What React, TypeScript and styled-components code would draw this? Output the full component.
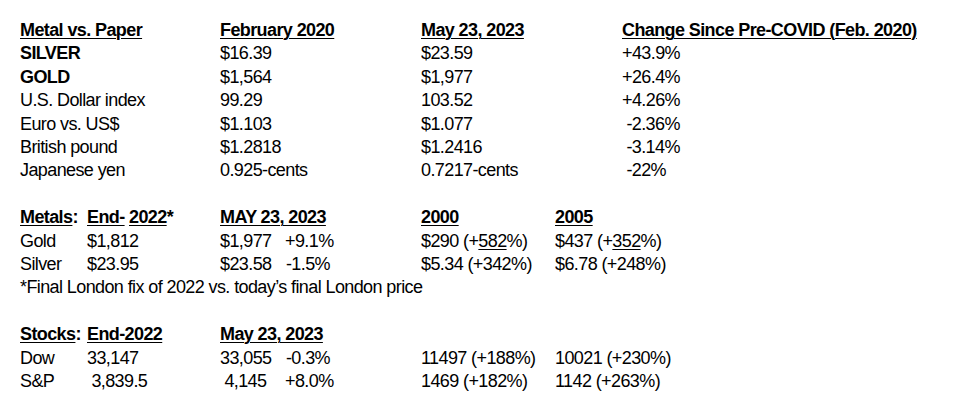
import styled, { createGlobalStyle } from 'styled-components';

const GlobalStyle = createGlobalStyle`
  html, body {
    margin: 0;
    background: #ffffff;
  }
  body {
    font-family: "Liberation Sans Narrow", "Arial Narrow", "Liberation Sans", Arial, sans-serif;
    font-size: 18px;
    line-height: 23.4px;
    letter-spacing: -0.6px;
    color: #000000;
  }
`;

const Page = styled.div`
  width: 960px;
  height: 410px;
  box-sizing: border-box;
  padding: 19px 0 0 20px;
  display: flex;
  flex-direction: column;
  gap: 23.4px;
`;

const CompareTable = styled.div`
  display: grid;
  grid-template-columns: 200px 201px 201px auto;
`;

const MarketTable = styled.div`
  display: grid;
  grid-template-columns: 67px 133px 201px 134px auto;
`;

const Cell = styled.div<{ $bold?: boolean }>`
  white-space: pre;
  font-weight: ${(p) => (p.$bold ? 700 : 400)};
`;

const Head = styled.div`
  white-space: pre;
  font-weight: 700;
`;

const U = styled.span`
  text-decoration: underline;
  text-decoration-thickness: 1px;
  text-underline-offset: 2px;
`;

const PairCell = styled.div`
  display: flex;
  white-space: pre;
`;

const PairValue = styled.span`
  width: 65px;
`;

const PairChange = styled.span`
  width: 45px;
  text-align: right;
`;

const Note = styled.div`
  grid-column: 1 / -1;
`;

const compareRows: [string, string, string, string, boolean][] = [
  ['SILVER', '$16.39', '$23.59', '+43.9%', true],
  ['GOLD', '$1,564', '$1,977', '+26.4%', true],
  ['U.S. Dollar index', '99.29', '103.52', '+4.26%', false],
  ['Euro vs. US$', '$1.103', '$1.077', ' -2.36%', false],
  ['British pound', '$1.2818', '$1.2416', ' -3.14%', false],
  ['Japanese yen', '0.925-cents', '0.7217-cents', ' -22%', false],
];

const App = () => {
  return (
    <>
      <GlobalStyle />
      <Page>
        <CompareTable>
          <Head><U>Metal vs. Paper</U></Head>
          <Head><U>February 2020</U></Head>
          <Head><U>May 23, 2023</U></Head>
          <Head><U>Change Since Pre-COVID (Feb. 2020)</U></Head>
          {compareRows.flatMap(([name, feb, may, chg, bold]) => [
            <Cell key={name + '-n'} $bold={bold}>{name}</Cell>,
            <Cell key={name + '-f'}>{feb}</Cell>,
            <Cell key={name + '-m'}>{may}</Cell>,
            <Cell key={name + '-c'}>{chg}</Cell>,
          ])}
        </CompareTable>

        <MarketTable>
          <Head><U>Metals</U>:</Head>
          <Head><U>End-</U> <U>2022</U>*</Head>
          <Head><U>MAY 23, 2023</U></Head>
          <Head><U>2000</U></Head>
          <Head><U>2005</U></Head>

          <Cell>Gold</Cell>
          <Cell>$1,812</Cell>
          <PairCell><PairValue>$1,977</PairValue><PairChange>+9.1%</PairChange></PairCell>
          <Cell>$290 (+<U>582</U>%)</Cell>
          <Cell>$437 (+<U>352</U>%)</Cell>

          <Cell>Silver</Cell>
          <Cell>$23.95</Cell>
          <PairCell><PairValue>$23.58</PairValue><PairChange>-1.5%</PairChange></PairCell>
          <Cell>$5.34 (+342%)</Cell>
          <Cell>$6.78 (+248%)</Cell>

          <Note>*Final London fix of 2022 vs. today’s final London price</Note>
        </MarketTable>

        <MarketTable>
          <Head><U>Stocks</U>:</Head>
          <Head><U>End-2022</U></Head>
          <Head><U>May 23, 2023</U></Head>
          <Cell />
          <Cell />

          <Cell>Dow</Cell>
          <Cell>33,147</Cell>
          <PairCell><PairValue>33,055</PairValue><PairChange>-0.3%</PairChange></PairCell>
          <Cell>11497 (+188%)</Cell>
          <Cell>10021 (+230%)</Cell>

          <Cell>S&amp;P</Cell>
          <Cell> 3,839.5</Cell>
          <PairCell><PairValue> 4,145</PairValue><PairChange>+8.0%</PairChange></PairCell>
          <Cell>1469 (+182%)</Cell>
          <Cell>1142 (+263%)</Cell>
        </MarketTable>
      </Page>
    </>
  );
};

export default App;
